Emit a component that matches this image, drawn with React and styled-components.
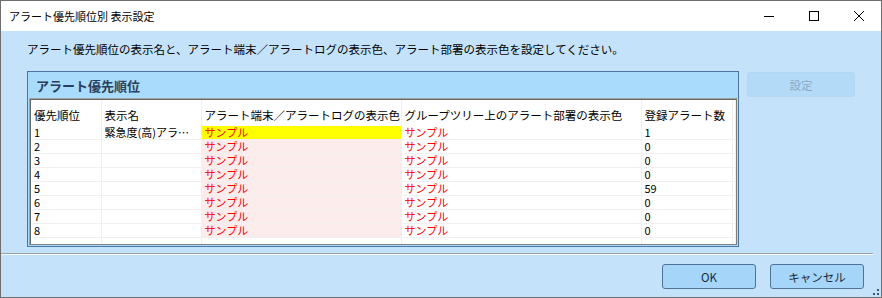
import React from 'react';
import styled, { createGlobalStyle } from 'styled-components';

const rows = [
  { no: 1, name: '緊急度(高)アラ…', highlight: true, count: '1' },
  { no: 2, name: '', count: '0' },
  { no: 3, name: '', count: '0' },
  { no: 4, name: '', count: '0' },
  { no: 5, name: '', count: '59' },
  { no: 6, name: '', count: '0' },
  { no: 7, name: '', count: '0' },
  { no: 8, name: '', count: '0' },
];

const App = () => {
  return (
    <>
      <GlobalStyle />
      <Window>
        <TitleBar>
          <Title>アラート優先順位別 表示設定</Title>
          <Controls>
            <CtrlButton>
              <svg width="12" height="12" viewBox="0 0 12 12">
                <path d="M1 6.5h10" stroke="#000" strokeWidth="1" />
              </svg>
            </CtrlButton>
            <CtrlButton>
              <svg width="12" height="12" viewBox="0 0 12 12">
                <rect x="1.5" y="1.5" width="9" height="9" fill="none" stroke="#000" strokeWidth="1" />
              </svg>
            </CtrlButton>
            <CtrlButton>
              <svg width="12" height="12" viewBox="0 0 12 12">
                <path d="M1 1L11 11M11 1L1 11" stroke="#000" strokeWidth="1" />
              </svg>
            </CtrlButton>
          </Controls>
        </TitleBar>
        <Client>
          <Instruction>
            アラート優先順位の表示名と、アラート端末／アラートログの表示色、アラート部署の表示色を設定してください。
          </Instruction>
          <MainRow>
            <GroupBox>
              <GroupHeader>アラート優先順位</GroupHeader>
              <GridFrame>
                <Table>
                  <colgroup>
                    <col style={{ width: 70 }} />
                    <col style={{ width: 100 }} />
                    <col style={{ width: 200 }} />
                    <col style={{ width: 240 }} />
                    <col style={{ width: 91 }} />
                    <col />
                  </colgroup>
                  <thead>
                    <tr>
                      <Th>優先順位</Th>
                      <Th>表示名</Th>
                      <Th>アラート端末／アラートログの表示色</Th>
                      <Th>グループツリー上のアラート部署の表示色</Th>
                      <Th>登録アラート数</Th>
                      <Th />
                    </tr>
                  </thead>
                  <tbody>
                    {rows.map((r) => (
                      <tr key={r.no}>
                        <Td>{r.no}</Td>
                        <Td>{r.name}</Td>
                        <Td $bg={r.highlight ? '#ffff00' : '#fcedec'} $red>サンプル</Td>
                        <Td $red>サンプル</Td>
                        <Td>{r.count}</Td>
                        <Td />
                      </tr>
                    ))}
                    <tr>
                      <Td /><Td /><Td /><Td /><Td /><Td />
                    </tr>
                  </tbody>
                </Table>
              </GridFrame>
            </GroupBox>
            <DialogButton disabled $width={108}>設定</DialogButton>
          </MainRow>
          <Separator />
          <Footer>
            <DialogButton $width={94}>OK</DialogButton>
            <DialogButton $width={94}>キャンセル</DialogButton>
          </Footer>
          <Grip>
            <svg width="6" height="6" viewBox="0 0 6 6">
              <rect x="4" y="0" width="2" height="2" fill="#40566e" />
              <rect x="0" y="4" width="2" height="2" fill="#40566e" />
              <rect x="4" y="4" width="2" height="2" fill="#40566e" />
            </svg>
          </Grip>
        </Client>
      </Window>
    </>
  );
};

const GlobalStyle = createGlobalStyle`
  html, body {
    margin: 0;
    padding: 0;
    background: #fff;
  }
  body {
    font-family: "Noto Sans CJK JP", "Noto Sans", sans-serif;
    font-size: 11px;
    color: #000;
  }
`;

const Window = styled.div`
  width: 882px;
  height: 298px;
  box-sizing: border-box;
  border: 1px solid #6f6f6f;
  display: flex;
  flex-direction: column;
  background: #fff;
`;

const TitleBar = styled.div`
  height: 30px;
  display: flex;
  align-items: center;
  justify-content: space-between;
  background: #fff;
`;

const Title = styled.div`
  padding-left: 8px;
  font-size: 11px;
  color: #000;
  line-height: 14px;
`;

const Controls = styled.div`
  display: flex;
  height: 100%;
`;

const CtrlButton = styled.div`
  width: 45px;
  height: 100%;
  display: flex;
  align-items: center;
  justify-content: center;
`;

const Client = styled.div`
  flex: 1;
  position: relative;
  display: flex;
  flex-direction: column;
  background-color: #c4e3fb;
  background-image: radial-gradient(rgba(255, 255, 255, 0.4) 0.6px, transparent 0.7px);
  background-size: 2px 2px;
`;

const Instruction = styled.div`
  padding: 11px 0 0 26px;
  line-height: 14px;
  font-size: 11.5px;
`;

const MainRow = styled.div`
  display: flex;
  align-items: flex-start;
  gap: 8px;
  padding: 15px 0 0 26px;
`;

const GroupBox = styled.div`
  width: 712px;
  height: 176px;
  box-sizing: border-box;
  border: 1px solid #4a76a6;
  display: flex;
  flex-direction: column;
  background: #a9dbfc;
`;

const GroupHeader = styled.div`
  height: 26px;
  display: flex;
  align-items: center;
  padding-left: 8px;
  font-size: 13px;
  font-weight: bold;
  color: #2a3f5c;
`;

const GridFrame = styled.div`
  flex: 1;
  margin: 0 1px 1px 1px;
  border: 1px solid #a0a0a0;
  border-right-color: #808080;
  border-bottom-color: #808080;
  box-shadow: inset 1px 1px 0 #696969;
  background: #fff;
  overflow: hidden;
  padding: 1px 0 0 1px;
`;

const Table = styled.table`
  border-collapse: collapse;
  table-layout: fixed;
  width: 100%;
  font-size: 11px;
`;

const Th = styled.th`
  height: 23px;
  padding: 3px 0 0 3px;
  text-align: left;
  font-weight: normal;
  font-size: 11.5px;
  white-space: nowrap;
  overflow: hidden;
  border-right: 1px solid #f0f0f0;
  line-height: 14px;
  vertical-align: middle;
`;

const Td = styled.td`
  height: 13px;
  padding: 0 0 0 3px;
  line-height: 13px;
  white-space: nowrap;
  overflow: hidden;
  border-right: 1px solid #f0f0f0;
  border-bottom: 1px solid #f0f0f0;
  background: ${(p) => p.$bg || '#fff'};
  color: ${(p) => (p.$red ? '#ff0000' : '#000')};
`;

const DialogButton = styled.button`
  width: ${(p) => p.$width}px;
  height: 25px;
  box-sizing: border-box;
  border: 1px solid ${(p) => (p.disabled ? '#b5d6ef' : '#4f7397')};
  border-radius: 3px;
  background: ${(p) => (p.disabled ? '#b3dbf8' : '#a5d6fa')};
  color: ${(p) => (p.disabled ? '#8da9c4' : '#1c2a3a')};
  font-family: "Noto Sans CJK JP", "Noto Sans", sans-serif;
  font-size: 11.5px;
  padding: 0;
  margin-top: 1px;
`;

const Separator = styled.div`
  margin-top: 6px;
  height: 1px;
  background: #9aa5b0;
  border-bottom: 1px solid #f4f9fd;
  margin-right: 8px;
`;

const Footer = styled.div`
  display: flex;
  justify-content: flex-end;
  gap: 14px;
  padding: 8px 17px 0 0;
`;

const Grip = styled.div`
  position: absolute;
  right: 2px;
  bottom: 2px;
  line-height: 0;
`;

export default App;
